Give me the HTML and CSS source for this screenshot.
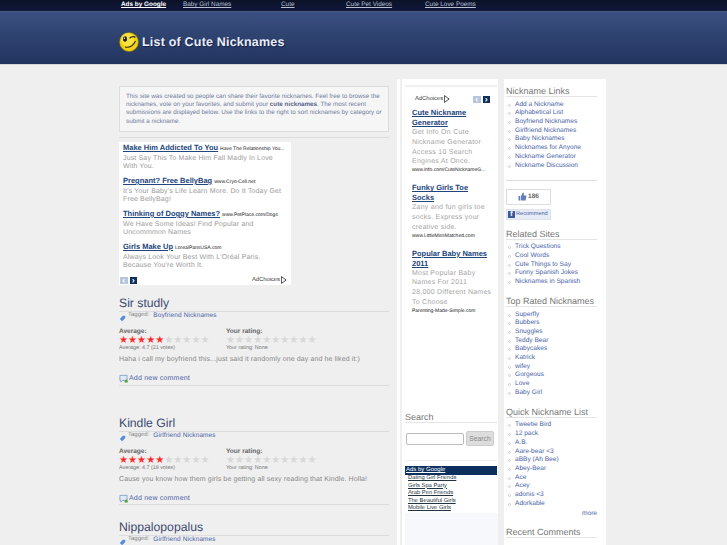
FILE: index.html
```html
<!DOCTYPE html>
<html>
<head>
    <title>List of Cute Nicknames</title>
    <link rel="stylesheet" href="styles.css">
</head>
<body>
    <div class="topbar">
        <div class="topbar-inner">
            <a class="ads-label" href="#">Ads by Google</a>
            <a class="l1" href="#">Baby Girl Names</a>
            <a class="l2" href="#">Cute</a>
            <a class="l3" href="#">Cute Pet Videos</a>
            <a class="l4" href="#">Cute Love Poems</a>
        </div>
    </div>
    <div class="header">
        <div class="header-inner">
            <svg class="smiley" width="20" height="20" viewBox="0 0 20 20">
                <circle cx="10" cy="10" r="9.5" fill="#f3d20c" stroke="#7d6f10" stroke-width=".6"/>
                <circle cx="8.5" cy="7.5" r="6.5" fill="#fbe95a" opacity=".7"/>
                <ellipse cx="6" cy="7" rx="2" ry="2.8" fill="#222"/>
                <circle cx="5.5" cy="6.2" r=".7" fill="#fff"/>
                <path d="M10.5 6.2 Q13.5 3.6 16.5 5.2" stroke="#222" stroke-width="1.3" fill="none"/>
                <path d="M6 15 Q13 16.5 16.5 9" stroke="#333" stroke-width="1.2" fill="none"/>
            </svg>
            <h1>List of Cute Nicknames</h1>
        </div>
    </div>

    <div class="page">
        <div class="main">
            <div class="intro">
                This site was created so people can share their favorite nicknames. Feel free to browse the nicknames, vote on your favorites, and submit your <b>cute nicknames</b>. The most recent submissions are displayed below. Use the links to the right to sort nicknames by category or submit a nickname.
            </div>
            <hr class="rule">

            <div class="ad-box">
                <div class="ad">
                    <a class="ad-title" href="#">Make Him Addicted To You</a> <span class="ad-url">Have The Relationship You...</span>
                    <p>Just Say This To Make Him Fall Madly In Love<br>With You.</p>
                </div>
                <div class="ad">
                    <a class="ad-title" href="#">Pregnant? Free BellyBag</a> <span class="ad-url">www.Cryo-Cell.net</span>
                    <p>It's Your Baby's Life Learn More. Do It Today Get<br>Free BellyBag!</p>
                </div>
                <div class="ad">
                    <a class="ad-title" href="#">Thinking of Doggy Names?</a> <span class="ad-url">www.PetPlace.com/Dogs</span>
                    <p>We Have Some Ideas! Find Popular and<br>Uncommmon Names</p>
                </div>
                <div class="ad">
                    <a class="ad-title" href="#">Girls Make Up</a> <span class="ad-url">LorealParisUSA.com</span>
                    <p>Always Look Your Best With L'Oréal Paris.<br>Because You're Worth It.</p>
                </div>
                <div class="ad-foot">
                    <span class="pager"><span class="pg off">&#8249;</span><span class="pg on">&#8250;</span></span>
                    <span class="adchoices">AdChoices <svg width="6" height="8" viewBox="0 0 7 9"><path d="M.5.5 L6 4.5 L.5 8.5Z" fill="#fff" stroke="#333"/></svg></span>
                </div>
            </div>

            <div class="post">
                <h2>Sir studly</h2>
                <div class="tagged">
                    <svg class="tag-icon" width="7" height="7" viewBox="0 0 9 9"><path d="M1 5 L5 1 L8 1 L8 4 L4 8Z" fill="#5b8ae0"/></svg>
                    <span>Tagged:</span> <a href="#">Boyfriend Nicknames</a>
                </div>
                <div class="ratings">
                    <div class="rate-col">
                        <b>Average:</b>
                        <div class="stars"><span class="red">★★★★★</span>★★★★★</div>
                        <small>Average: 4.7 (21 votes)</small>
                    </div>
                    <div class="rate-col">
                        <b>Your rating:</b>
                        <div class="stars">★★★★★★★★★★</div>
                        <small>Your rating: None</small>
                    </div>
                </div>
                <p class="post-text">Haha i call my boyfriend this...just said it randomly one day and he liked it:)</p>
                <div class="comment-link">
                    <svg width="9" height="9" viewBox="0 0 10 10"><path d="M1 1.5 H9 V7 H4 L2 9 V7 H1Z" fill="#dfe9f7" stroke="#6f8fc0" stroke-width=".8"/><circle cx="8" cy="8" r="1.8" fill="#5aa83c"/></svg>
                    <a href="#">Add new comment</a>
                </div>
            </div>

            <div class="post">
                <h2>Kindle Girl</h2>
                <div class="tagged">
                    <svg class="tag-icon" width="7" height="7" viewBox="0 0 9 9"><path d="M1 5 L5 1 L8 1 L8 4 L4 8Z" fill="#5b8ae0"/></svg>
                    <span>Tagged:</span> <a href="#">Girlfriend Nicknames</a>
                </div>
                <div class="ratings">
                    <div class="rate-col">
                        <b>Average:</b>
                        <div class="stars"><span class="red">★★★★★</span>★★★★★</div>
                        <small>Average: 4.7 (18 votes)</small>
                    </div>
                    <div class="rate-col">
                        <b>Your rating:</b>
                        <div class="stars">★★★★★★★★★★</div>
                        <small>Your rating: None</small>
                    </div>
                </div>
                <p class="post-text">Cause you know how them girls be getting all sexy reading that Kindle. Holla!</p>
                <div class="comment-link">
                    <svg width="9" height="9" viewBox="0 0 10 10"><path d="M1 1.5 H9 V7 H4 L2 9 V7 H1Z" fill="#dfe9f7" stroke="#6f8fc0" stroke-width=".8"/><circle cx="8" cy="8" r="1.8" fill="#5aa83c"/></svg>
                    <a href="#">Add new comment</a>
                </div>
            </div>

            <div class="post">
                <h2>Nippalopopalus</h2>
                <div class="tagged">
                    <svg class="tag-icon" width="7" height="7" viewBox="0 0 9 9"><path d="M1 5 L5 1 L8 1 L8 4 L4 8Z" fill="#5b8ae0"/></svg>
                    <span>Tagged:</span> <a href="#">Girlfriend Nicknames</a>
                </div>
                <div class="ratings">
                    <div class="rate-col"><b>Average:</b></div>
                    <div class="rate-col"><b>Your rating:</b></div>
                </div>
            </div>
        </div>

        <div class="side">
            <div class="strip"></div>
            <div class="col-mid">
                <div class="tower">
                    <div class="tower-top">
                        <span class="adchoices">AdChoices <svg width="6" height="8" viewBox="0 0 7 9"><path d="M.5.5 L6 4.5 L.5 8.5Z" fill="#fff" stroke="#333"/></svg></span>
                        <span class="pager"><span class="pg off">&#8249;</span><span class="pg on">&#8250;</span></span>
                    </div>
                    <div class="tad">
                        <a class="ad-title" href="#">Cute Nickname<br>Generator</a>
                        <p>Get Info On Cute<br>Nickname Generator<br>Access 10 Search<br>Engines At Once.</p>
                        <span class="ad-url">www.Info.com/CuteNicknameG...</span>
                    </div>
                    <div class="tad">
                        <a class="ad-title" href="#">Funky Girls Toe<br>Socks</a>
                        <p>Zany and fun girls toe<br>socks. Express your<br>creative side.</p>
                        <span class="ad-url">www.LittleMissMatched.com</span>
                    </div>
                    <div class="tad">
                        <a class="ad-title" href="#">Popular Baby Names<br>2011</a>
                        <p>Most Popular Baby<br>Names For 2011<br>28,000 Different Names<br>To Choose</p>
                        <span class="ad-url">Parenting-Made-Simple.com</span>
                    </div>
                </div>
                <h3>Search</h3>
                <form class="search">
                    <input type="text">
                    <button type="button">Search</button>
                </form>
                <div class="linkunit">
                    <div class="linkunit-head">Ads by Google</div>
                    <a href="#">Dating Girl Friends</a>
                    <a href="#">Girls Spa Party</a>
                    <a href="#">Arab Pen Friends</a>
                    <a href="#">The Beautiful Girls</a>
                    <a href="#">Mobile Live Girls</a>
                </div>
                <div class="mid-fill"></div>
            </div>

            <div class="col-right">
                <h3>Nickname Links</h3>
                <ul>
                    <li><a href="#">Add a Nickname</a></li>
                    <li><a href="#">Alphabetical List</a></li>
                    <li><a href="#">Boyfriend Nicknames</a></li>
                    <li><a href="#">Girlfriend Nicknames</a></li>
                    <li><a href="#">Baby Nicknames</a></li>
                    <li><a href="#">Nicknames for Anyone</a></li>
                    <li><a href="#">Nickname Generator</a></li>
                    <li><a href="#">Nickname Discussion</a></li>
                </ul>
                <hr class="side-rule">
                <div class="like-count">
                    <svg width="9" height="9" viewBox="0 0 9 9"><path d="M.5 4 H2.3 V8.5 H.5Z M3 4 L5 .5 L6 1 L5.6 3.5 H8.5 L7.6 8.5 H3Z" fill="#5f7fb8"/></svg>
                    186
                </div>
                <div class="like-btn"><span class="fb">f</span> Recommend</div>
                <h3>Related Sites</h3>
                <ul>
                    <li><a href="#">Trick Questions</a></li>
                    <li><a href="#">Cool Words</a></li>
                    <li><a href="#">Cute Things to Say</a></li>
                    <li><a href="#">Funny Spanish Jokes</a></li>
                    <li><a href="#">Nicknames in Spanish</a></li>
                </ul>
                <h3>Top Rated Nicknames</h3>
                <ul>
                    <li><a href="#">Superfly</a></li>
                    <li><a href="#">Bubbers</a></li>
                    <li><a href="#">Snuggles</a></li>
                    <li><a href="#">Teddy Bear</a></li>
                    <li><a href="#">Babycakes</a></li>
                    <li><a href="#">Katrick</a></li>
                    <li><a href="#">wifey</a></li>
                    <li><a href="#">Gorgeous</a></li>
                    <li><a href="#">Love</a></li>
                    <li><a href="#">Baby Girl</a></li>
                </ul>
                <h3>Quick Nickname List</h3>
                <ul>
                    <li><a href="#">Tweetie Bird</a></li>
                    <li><a href="#">12 pack</a></li>
                    <li><a href="#">A.B.</a></li>
                    <li><a href="#">Aare-bear &lt;3</a></li>
                    <li><a href="#">aBBy (Ah Bee)</a></li>
                    <li><a href="#">Abey-Bear</a></li>
                    <li><a href="#">Ace</a></li>
                    <li><a href="#">Acey</a></li>
                    <li><a href="#">adonis &lt;3</a></li>
                    <li><a href="#">Adorkable</a></li>
                </ul>
                <div class="more"><a href="#">more</a></div>
                <h3>Recent Comments</h3>
            </div>
        </div>
    </div>
</body>
</html>
```

FILE: styles.css
```css
html, body { height: 545px; overflow: hidden; }
body { margin: 0; background: #efefef; font-family: "Liberation Sans", Arial, sans-serif; font-size: 7px; color: #777; text-rendering: geometricPrecision; }
a { color: #4a64a8; text-decoration: none; }
p { margin: 0; }

.topbar { height: 11px; background: linear-gradient(#0b1228, #10183a); border-bottom: 1px solid #4a5a82; }
.topbar-inner { margin-left: 121px; display: flex; height: 11px; line-height: 9px; }
.topbar a { color: #b8c0d0; font-size: 6.4px; text-decoration: underline; }
.topbar .ads-label { color: #fff; font-weight: bold; width: 62px; }
.topbar .l1 { width: 98px; }
.topbar .l2 { width: 65px; }
.topbar .l3 { width: 79px; }

.header { height: 52px; background: linear-gradient(#3a5080, #22335f); border-bottom: 1px solid #d8d8d8; }
.header-inner { margin-left: 119px; padding-top: 20px; display: flex; align-items: center; gap: 3px; }
h1 { margin: 0; font-size: 12.5px; line-height: 20px; font-weight: bold; color: #e8eef8; text-shadow: 1px 1px 1px #16224a; letter-spacing: .2px; }

.page { display: flex; padding: 14px 0 0 119px; align-items: flex-start; }
.main { width: 270px; margin: 7px 8px 0 0; }

.intro { border: 1px solid #dcdcdc; background: #f6f6f6; padding: 6px; height: 46px; box-sizing: border-box; font-size: 6.3px; line-height: 8.2px; color: #6f7a9c; }
.intro b { color: #59648a; }
.rule { border: 0; border-top: 1px solid #dcdcdc; margin: 5px 0 0; }

.ad-box { width: 172px; height: 143px; background: #fff; margin-top: 4px; padding: 2px 4px 0; box-sizing: border-box; position: relative; }
.ad { margin-bottom: 6px; white-space: nowrap; }
.ad-title { font-size: 7.5px; line-height: 8px; font-weight: bold; color: #22457c; text-decoration: underline; }
.ad-url { font-size: 5px; color: #222; }
.ad > .ad-title, .ad > .ad-url { vertical-align: baseline; }
.ad p { font-size: 7px; letter-spacing: .15px; line-height: 8px; color: #9b9b9b; margin-top: 3px; }
.ad-foot { position: absolute; left: 1px; right: 4px; bottom: 1px; display: flex; justify-content: space-between; align-items: center; }
.pager { display: flex; gap: 2px; }
.pg { width: 7.5px; height: 7px; line-height: 6px; font-size: 9px; font-weight: bold; text-align: center; color: #fff; display: block; }
.pg.off { background: #b7c6dc; }
.pg.on { background: #0c2f5e; }
.adchoices { color: #333; font-size: 5.8px; display: flex; align-items: center; gap: 1px; }

.post { border-bottom: 1px solid #dcdcdc; height: 90px; box-sizing: border-box; margin: 11px 0 15px; }
.post + .post { margin-top: 0; height: 104px; padding-top: 15px; margin-bottom: 0; }
.post:last-child { border: 0; }
.post h2 { margin: 0; height: 15px; font-size: 12.2px; line-height: 15px; font-weight: normal; color: #3c4a70; border-bottom: 1px solid #dcdcdc; }
.tagged { display: flex; gap: 3px; font-size: 6px; line-height: 7px; height: 16px; align-items: flex-start; color: #888; white-space: nowrap; }
.tagged a { font-size: 6.5px; letter-spacing: .1px; margin-left: 1px; }
.tag-icon { margin: 3px -1px 0 0; }
.ratings { display: flex; }
.rate-col { width: 107px; }
.rate-col b { display: block; font-size: 6.5px; line-height: 7px; color: #666; }
.stars { font-family: "DejaVu Sans", sans-serif; font-size: 10.1px; line-height: 9px; color: #d8d8d8; margin-top: 1px; white-space: nowrap; }
.stars .red { color: #fb2c2c; }
.rate-col small { display: block; font-size: 5.4px; line-height: 6px; color: #777; }
.post-text { font-size: 7px; letter-spacing: .12px; line-height: 8px; color: #888; margin-top: 5px; }
.comment-link { display: flex; align-items: center; gap: 1px; margin-top: 10px; font-size: 7px; letter-spacing: .2px; line-height: 9px; }

.side { display: flex; width: 210px; height: 466px; flex-shrink: 0; }
.strip { width: 3px; background: #fff; margin-right: 2px; }
.col-mid { width: 96px; background: #fff; padding: 6px 1px 0 3px; box-sizing: border-box; margin-right: 6px; display: flex; flex-direction: column; }
.tower { border-top: 2px solid #f0f0f0; height: 327px; box-sizing: border-box; padding: 0 3px 0 7px; }
.tower-top { display: flex; justify-content: space-between; align-items: center; padding: 8px 4px 5px 3px; height: 21px; box-sizing: border-box; }
.tad { margin-bottom: 9px; white-space: nowrap; }
.tower .ad-title { display: block; line-height: 10px; }
.tad p { font-size: 7px; letter-spacing: .25px; line-height: 9.8px; color: #a5a5a5; }
.tad .ad-url { display: block; line-height: 7px; }

h3 { margin: 0; height: 10px; font-size: 9px; line-height: 10px; font-weight: normal; color: #777; border-bottom: 1px solid #e4e4e4; }
.search { display: flex; gap: 2px; padding: 8px 0 14px 1px; border-bottom: 1px solid #eee; align-items: center; }
.search input { width: 58px; height: 12px; padding: 0; margin: 0; box-sizing: border-box; border: 1px solid #bbb; border-radius: 2px; background: #fff; }
.search button { width: 28px; height: 15px; padding: 0; border: 1px solid #ccc; border-radius: 2px; background: #ddd; color: #888; font-family: "Liberation Sans", sans-serif; font-size: 6.8px; }
.linkunit { margin-top: 5px; }
.linkunit-head { background: #0c2f5e; color: #fff; font-size: 6px; line-height: 9px; padding-left: 1px; text-decoration: underline; }
.linkunit a { display: block; font-size: 5.8px; line-height: 7.6px; padding-left: 3px; color: #234; text-decoration: underline; }
.mid-fill { flex: 1; background: #f6f8fb; margin-right: -1px; }

.col-right { width: 102px; background: #fff; padding: 7px 9px 0 2px; box-sizing: border-box; }
.col-right h3 { margin-bottom: 3.6px; }
.col-right ul { list-style: none; margin: 0 0 9.3px; padding: 0; }
.col-right li { position: relative; padding-left: 9px; font-size: 6.6px; line-height: 8.7px; white-space: nowrap; }
.col-right li::before { content: ""; position: absolute; left: 2px; top: 3px; width: 3px; height: 3px; border: 1px solid #ccc; border-radius: 50%; box-sizing: border-box; }
.side-rule { border: 0; border-top: 1px solid #dcdcdc; margin: 0 0 8px; }
.like-count { width: 45px; height: 16px; box-sizing: border-box; border: 1px solid #ddd; margin-bottom: 4px; display: flex; align-items: center; justify-content: center; gap: 1px; font-size: 6.5px; font-weight: bold; color: #666; }
.like-btn { width: 45px; height: 11px; box-sizing: border-box; background: #e6ebf5; border: 1px solid #dde3ef; color: #4a64a8; font-size: 5.6px; line-height: 9px; margin-bottom: 9px; display: flex; align-items: center; gap: 1px; padding-left: 1px; white-space: nowrap; }
.fb { display: block; width: 7px; height: 7px; background: #3b5998; color: #fff; font-weight: bold; font-size: 7px; line-height: 8px; text-align: center; }
.more { text-align: right; font-size: 6.6px; line-height: 7px; margin: -7.8px 0 10.5px; }
```
